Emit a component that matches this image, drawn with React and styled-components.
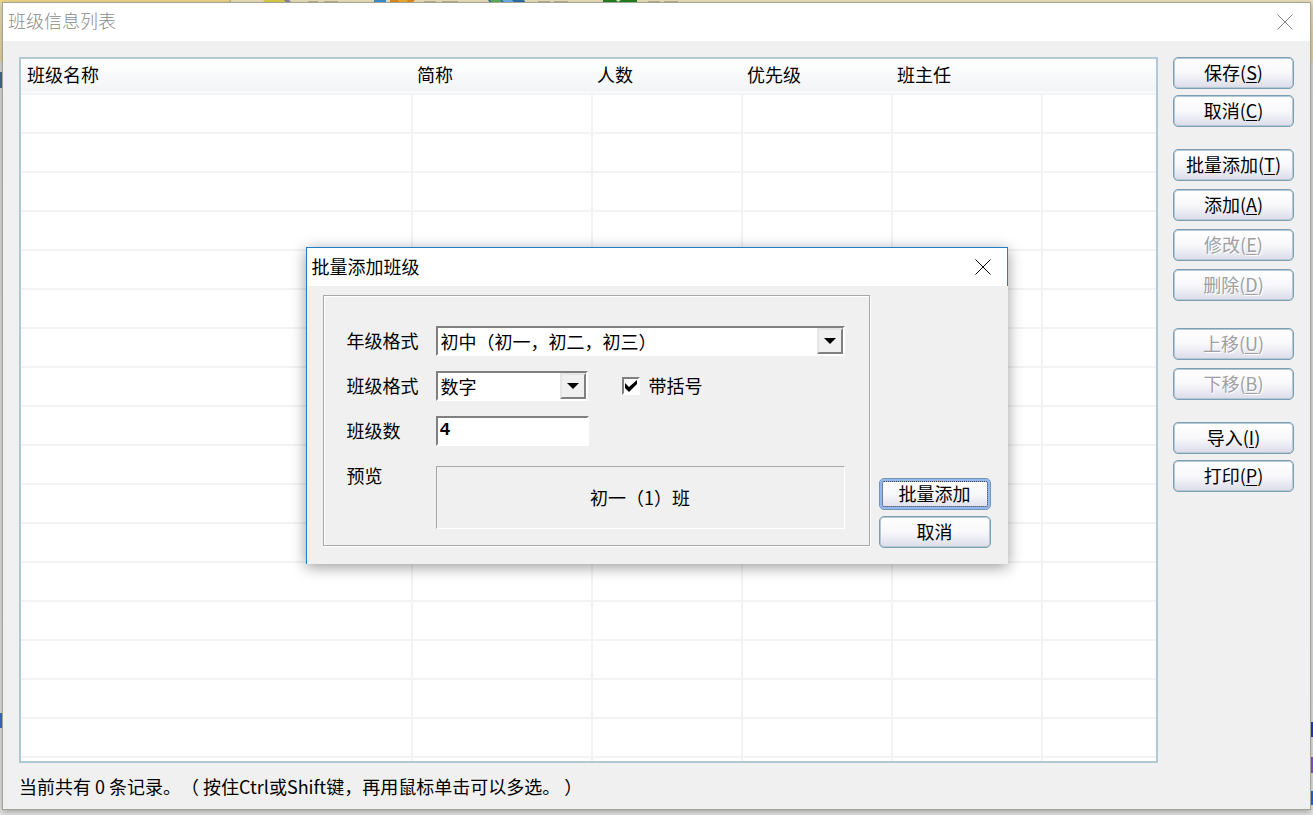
import React from 'react'
import styled, { createGlobalStyle, css } from 'styled-components'

const columns = ['班级名称', '简称', '人数', '优先级', '班主任', '']
const emptyRows = Array.from({ length: 18 }, (_, i) => i)

const actionGroups = [
  {
    tight: true,
    items: [
      { text: '保存', hotkey: 'S' },
      { text: '取消', hotkey: 'C' },
    ],
  },
  {
    items: [
      { text: '批量添加', hotkey: 'T' },
      { text: '添加', hotkey: 'A' },
      { text: '修改', hotkey: 'E', disabled: true },
      { text: '删除', hotkey: 'D', disabled: true },
    ],
  },
  {
    spaced: true,
    items: [
      { text: '上移', hotkey: 'U', disabled: true },
      { text: '下移', hotkey: 'B', disabled: true },
    ],
  },
  {
    tight: true,
    items: [
      { text: '导入', hotkey: 'I' },
      { text: '打印', hotkey: 'P' },
    ],
  },
]

function CloseIcon() {
  return (
    <svg width="16" height="16" viewBox="0 0 16 16" aria-hidden="true">
      <path d="M0.5 0.5L15.5 15.5M15.5 0.5L0.5 15.5" fill="none" stroke="currentColor" strokeWidth="1" />
    </svg>
  )
}

// sliver of the main program's toolbar, visible above the window
function ToolbarArt() {
  return (
    <Toolbar viewBox="0 0 700 3" width="700" height="3" aria-hidden="true">
      <rect x="0" y="0" width="229" height="3" fill="#efd685" />
      <rect x="229" y="0" width="2" height="3" fill="#c9b98d" />
      <path d="M264 0h22l6 3h-29z" fill="#d9cf45" />
      <path d="M284 0h5l3 3h-5z" fill="#7d83a8" />
      <path d="M308 2h10M324 2h14" stroke="#8d8672" strokeWidth="1" />
      <rect x="374" y="0" width="12" height="3" fill="#3c8ed0" />
      <path d="M390 0h25l-3 3h-22z" fill="#e08a1c" />
      <path d="M398 0h10l-2 3h-6z" fill="#f0b030" />
      <path d="M424 2h12M442 2h16" stroke="#8d8672" strokeWidth="1" />
      <path d="M488 0h36l2 3h-36z" fill="#2f6fa6" />
      <path d="M490 0h10l3 3h-11z" fill="#5fb05a" />
      <path d="M502 0h10l3 3h-10z" fill="#6fb0e8" />
      <path d="M538 2h12M554 2h14" stroke="#8d8672" strokeWidth="1" />
      <rect x="603" y="0" width="34" height="3" fill="#23801f" />
      <path d="M616 0l2 2 3-2z" fill="#d8f0d0" />
      <path d="M648 2h12M664 2h14" stroke="#8d8672" strokeWidth="1" />
    </Toolbar>
  )
}

function ActionButton({ text, hotkey, disabled }) {
  return (
    <PushButton type="button" disabled={disabled}>
      {text}(<Hotkey>{hotkey}</Hotkey>)
    </PushButton>
  )
}

function ComboBox({ id, value, short }) {
  return (
    <Combo $short={short}>
      <ComboSelect id={id} defaultValue={value}>
        <option>{value}</option>
      </ComboSelect>
      <ComboArrow aria-hidden="true">
        <svg width="12" height="6" viewBox="0 0 12 6">
          <path d="M0 0h12L6 6z" fill="#000" />
        </svg>
      </ComboArrow>
    </Combo>
  )
}

function ClassTable() {
  return (
    <TableFrame>
      <Table>
        <colgroup>
          <Col $width={392} />
          <Col $width={180} />
          <Col $width={150} />
          <Col $width={150} />
          <Col $width={150} />
          <Col />
        </colgroup>
        <thead>
          <tr>
            {columns.map((name, i) => (
              <HeadCell key={i}>{name}</HeadCell>
            ))}
          </tr>
        </thead>
        <tbody>
          {emptyRows.map((row) => (
            <tr key={row}>
              {columns.map((_, i) => (
                <Cell key={i} />
              ))}
            </tr>
          ))}
        </tbody>
      </Table>
    </TableFrame>
  )
}

function BatchDialog() {
  return (
    <Dialog role="dialog" aria-labelledby="dialog-title">
      <DialogBar>
        <DialogTitle id="dialog-title">批量添加班级</DialogTitle>
        <CloseButton type="button" aria-label="关闭">
          <CloseIcon />
        </CloseButton>
      </DialogBar>
      <DialogBody>
        <GroupBox>
          <FieldLabel htmlFor="grade-format">年级格式</FieldLabel>
          <ComboBox id="grade-format" value="初中（初一，初二，初三）" />

          <FieldLabel htmlFor="class-format">班级格式</FieldLabel>
          <FieldLine>
            <ComboBox id="class-format" value="数字" short />
            <CheckBox>
              <CheckInput id="with-brackets" type="checkbox" defaultChecked />
              <CheckMark width="12" height="12" viewBox="0 0 12 12" aria-hidden="true">
                <path d="M0 3L4 7L12 0V4L4 12L0 8Z" fill="#000" />
              </CheckMark>
            </CheckBox>
            <CheckLabel htmlFor="with-brackets">带括号</CheckLabel>
          </FieldLine>

          <FieldLabel htmlFor="class-count">班级数</FieldLabel>
          <CountInput id="class-count" type="text" defaultValue="4" />

          <FieldLabel as="span">预览</FieldLabel>
          <Preview>初一（1）班</Preview>
        </GroupBox>
        <DialogActions>
          <PushButton type="button" $focused>批量添加</PushButton>
          <PushButton type="button">取消</PushButton>
        </DialogActions>
      </DialogBody>
    </Dialog>
  )
}

export default function App() {
  return (
    <Desktop>
      <GlobalStyle />
      <ToolbarArt />
      <Window>
        <TitleBar>
          <WindowTitle>班级信息列表</WindowTitle>
          <CloseButton type="button" aria-label="关闭" $muted>
            <CloseIcon />
          </CloseButton>
        </TitleBar>
        <WindowBody>
          <ClassTable />
          <Actions>
            {actionGroups.map((group, i) => (
              <ActionGroup key={i} $tight={group.tight} $spaced={group.spaced}>
                {group.items.map((item) => (
                  <ActionButton key={item.hotkey} {...item} />
                ))}
              </ActionGroup>
            ))}
          </Actions>
        </WindowBody>
        <StatusBar>当前共有 0 条记录。（ 按住Ctrl或Shift键，再用鼠标单击可以多选。 ）</StatusBar>
        <Overlay>
          <BatchDialog />
        </Overlay>
      </Window>
    </Desktop>
  )
}

const GlobalStyle = createGlobalStyle`
  * {
    box-sizing: border-box;
  }

  body {
    margin: 0;
  }

  body, button, input, select {
    font-family: "Noto Sans CJK SC", sans-serif;
    font-size: 18px;
    color: #000;
  }
`;

const Desktop = styled.div`
  position: relative;
  display: flex;
  height: 100vh;
  min-height: 600px;
  padding: 2px 2px 5px;
  background:
    linear-gradient(#2038d0, #2038d0) right 0 bottom 78px / 2px 15px no-repeat,
    linear-gradient(#8850d8, #8850d8) right 0 bottom 42px / 2px 16px no-repeat,
    linear-gradient(#1f66e0, #1f66e0) right 0 bottom 10px / 2px 14px no-repeat,
    linear-gradient(#3c6cd0, #3c6cd0) left 0 bottom 87px / 2px 15px no-repeat,
    linear-gradient(#4a6a94, #4a6a94) left 0 top 72px / 2px 16px no-repeat,
    linear-gradient(to bottom, #ebe0bd 0, #e6d6a0 60px, #dcdcdc 64px, #e4e4e4 100%);
`;

const Toolbar = styled.svg`
  position: absolute;
  top: 0;
  left: 0;
`;

const Window = styled.main`
  position: relative;
  flex: 1;
  display: flex;
  flex-direction: column;
  min-width: 0;
  border: 1px solid #a5a596;
  background: #f0f0f0;
  box-shadow: 0 2px 6px rgba(0, 0, 0, 0.3);
`;

const TitleBar = styled.header`
  display: flex;
  align-items: center;
  justify-content: space-between;
  height: 38px;
  padding: 0 17px 0 5px;
  background: #fff;
`;

const WindowTitle = styled.h1`
  margin: 0;
  padding-bottom: 4px;
  font-size: 18px;
  font-weight: 300;
  line-height: 26px;
  color: #8c8c8c;
`;

const CloseButton = styled.button`
  display: flex;
  padding: 0;
  border: 0;
  background: none;
  color: ${({ $muted }) => ($muted ? '#888' : '#000')};
`;

const WindowBody = styled.div`
  flex: 1;
  display: flex;
  gap: 15px;
  min-height: 0;
  padding: 16px 16px 0;
`;

const TableFrame = styled.div`
  flex: 1;
  min-width: 0;
  overflow: hidden;
  border: 2px solid #b0c8d4;
  background: #fff;
`;

const Table = styled.table`
  width: 100%;
  table-layout: fixed;
  border-spacing: 0;
`;

const Col = styled.col`
  width: ${({ $width }) => ($width ? `${$width}px` : 'auto')};
`;

const HeadCell = styled.th`
  height: 36px;
  padding: 0 4px 4px;
  border-bottom: 2px solid #f3f3f3;
  background: linear-gradient(to bottom, #fff 0, #f8f9fa 50%, #f2f4f6 94%, #fff 100%);
  font-weight: 400;
  line-height: 28px;
  text-align: left;

  &:first-child {
    padding-left: 6px;
  }
`;

const Cell = styled.td`
  height: 39px;
  padding: 0;
  border-bottom: 2px solid #f3f3f3;

  &:not(:last-child) {
    border-right: 2px solid #f3f3f3;
  }
`;

const Actions = styled.nav`
  display: flex;
  flex-direction: column;
  gap: 22px;
  width: 121px;
`;

const ActionGroup = styled.div`
  display: flex;
  flex-direction: column;
  gap: ${({ $tight }) => ($tight ? '6px' : '8px')};
  margin-top: ${({ $spaced }) => ($spaced ? '5px' : '0')};
`;

const PushButton = styled.button`
  height: 32px;
  padding: 0 0 2px;
  border: 1px solid #7c9fb4;
  border-radius: 5px;
  background: linear-gradient(to bottom, #fff 0, #f8f8fb 50%, #dcdcea 100%);
  box-shadow: inset 0 0 0 1px #b4c8d5;
  line-height: 26px;
  white-space: nowrap;

  &:disabled {
    color: #a0a0a0;
    text-shadow: 1px 1px #fff;
  }

  ${({ $focused }) => $focused && css`
    border-color: #6f96bb;
    box-shadow: inset 0 0 0 3px #94b8ee;
    outline: 1px dotted #444;
    outline-offset: -4px;
  `}
`;

const Hotkey = styled.span`
  text-decoration: underline;
  text-underline-offset: 2px;
`;

const StatusBar = styled.footer`
  height: 46px;
  padding: 9px 16px;
  line-height: 28px;
  text-spacing-trim: space-all;
`;

const Overlay = styled.div`
  position: absolute;
  inset: 0;
  display: flex;
  align-items: center;
  justify-content: center;
  padding-bottom: 2px;
`;

const Dialog = styled.section`
  width: 702px;
  border-left: 1px solid #1f7fc8;
  background: #f0f0f0;
  box-shadow: 0 3px 14px rgba(0, 0, 0, 0.4);
`;

const DialogBar = styled.header`
  display: flex;
  align-items: center;
  justify-content: space-between;
  height: 39px;
  padding: 0 16px 0 5px;
  border-top: 1px solid #1f7fc8;
  border-right: 1px solid #1f7fc8;
  background: #fff;
`;

const DialogTitle = styled.h2`
  margin: 0;
  padding-bottom: 2px;
  font-size: 18px;
  font-weight: 400;
  line-height: 26px;
`;

const DialogBody = styled.div`
  display: flex;
  gap: 9px;
  padding: 9px 17px 16px 16px;
`;

const GroupBox = styled.div`
  flex: 1;
  display: grid;
  grid-template-columns: 89px 1fr;
  row-gap: 15px;
  margin-bottom: 2px;
  padding: 30px 24px 16px 23px;
  border: 1px solid #a8a8a8;
  box-shadow: 1px 1px #fff, inset 1px 1px #fff;
`;

const FieldLabel = styled.label`
  line-height: 28px;
`;

const FieldLine = styled.div`
  display: flex;
  align-items: center;
`;

const sunken = css`
  border: 2px solid;
  border-color: #808080 #fff #fff #808080;
  border-radius: 0;
  background: #fff;
`;

const Combo = styled.div`
  position: relative;
  width: ${({ $short }) => ($short ? '152px' : '100%')};
`;

const ComboSelect = styled.select`
  ${sunken}
  appearance: none;
  display: block;
  width: 100%;
  height: 30px;
  padding: 0 28px 2px 3px;
`;

const ComboArrow = styled.span`
  position: absolute;
  top: 2px;
  right: 2px;
  display: flex;
  align-items: center;
  justify-content: center;
  width: 26px;
  height: 26px;
  border: 2px solid;
  border-color: #e6e6e6 #808080 #808080 #e6e6e6;
  background: #f0f0f0;
  pointer-events: none;
`;

const CheckLabel = styled.label`
  padding: 0 0 2px 9px;
  line-height: 28px;
`;

const CheckBox = styled.span`
  position: relative;
  display: flex;
  margin-left: 34px;
`;

const CheckInput = styled.input`
  ${sunken}
  appearance: none;
  width: 18px;
  height: 18px;
  margin: 0;
`;

const CheckMark = styled.svg`
  position: absolute;
  top: 3px;
  left: 3px;
  pointer-events: none;

  input:not(:checked) + & {
    display: none;
  }
`;

const CountInput = styled.input`
  ${sunken}
  width: 153px;
  height: 30px;
  padding: 0 2px 2px;
  font-family: "Liberation Mono", monospace;
  font-weight: 700;
`;

const Preview = styled.div`
  display: flex;
  align-items: center;
  justify-content: center;
  height: 63px;
  margin-top: 5px;
  border: 1px solid;
  border-color: #a8a8a8 #fff #fff #a8a8a8;
`;

const DialogActions = styled.div`
  display: flex;
  flex-direction: column;
  justify-content: flex-end;
  gap: 6px;
  width: 112px;
`;
